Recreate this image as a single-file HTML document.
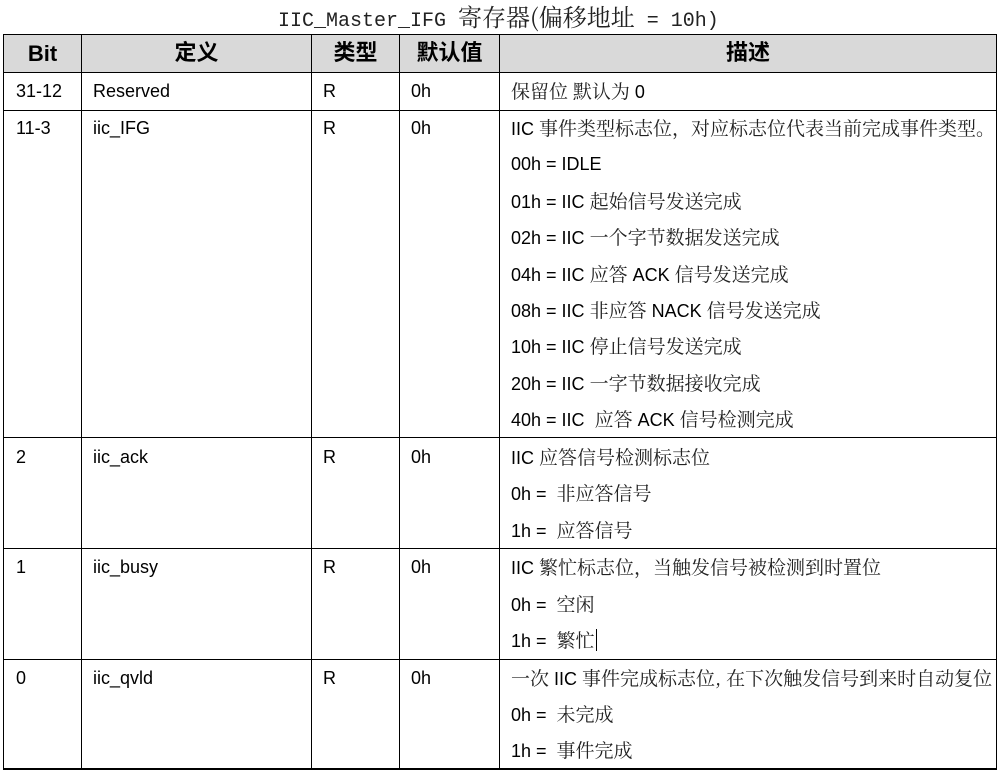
<!DOCTYPE html>
<html><head><meta charset="utf-8"><style>
body{margin:0;width:999px;height:772px;background:#fff;position:relative;overflow:hidden;font-family:"Liberation Sans","Noto Sans CJK SC",sans-serif;color:#000}
.h{position:absolute;background:#000;height:1px}
.v{position:absolute;background:#000;width:1px}
.t{position:absolute;font-size:18px;line-height:22px;white-space:nowrap}
.c{font-family:"Liberation Sans","Noto Serif CJK SC",serif}
.k{font-family:"Noto Serif CJK SC",serif;font-size:19px;color:#222}
.hd{position:absolute;font-size:22px;font-weight:bold;line-height:24px;text-align:center;font-family:"Liberation Sans","Noto Sans CJK SC",sans-serif}
.title{position:absolute;left:278px;top:4px;font-family:"Liberation Mono","Noto Serif CJK SC",monospace;font-size:20px;line-height:24px;color:#222;white-space:nowrap}
.title .k{font-size:24px;color:#222}
</style></head><body>
<div class="title">IIC_Master_IFG <span class="k">寄存器(偏移地址</span> = 10h)</div>
<div style="position:absolute;left:4px;top:35px;width:993px;height:37px;background:#d9d9d9"></div>
<div class="h" style="left:3px;top:34px;width:994px"></div>
<div class="h" style="left:3px;top:72px;width:994px"></div>
<div class="h" style="left:3px;top:110px;width:994px"></div>
<div class="h" style="left:3px;top:437px;width:994px"></div>
<div class="h" style="left:3px;top:548px;width:994px"></div>
<div class="h" style="left:3px;top:659px;width:994px"></div>
<div class="h" style="left:3px;top:768px;width:994px;height:2px"></div>
<div class="v" style="left:3px;top:34px;height:736px"></div>
<div class="v" style="left:81px;top:34px;height:736px"></div>
<div class="v" style="left:311px;top:34px;height:736px"></div>
<div class="v" style="left:399px;top:34px;height:736px"></div>
<div class="v" style="left:499px;top:34px;height:736px"></div>
<div class="v" style="left:996px;top:34px;height:736px"></div>
<div class="hd" style="left:4px;width:77px;top:42px">Bit</div>
<div class="hd" style="left:82px;width:229px;top:41px">定义</div>
<div class="hd" style="left:312px;width:87px;top:41px">类型</div>
<div class="hd" style="left:400px;width:99px;top:41px">默认值</div>
<div class="hd" style="left:500px;width:496px;top:41px">描述</div>

<div class="t" style="left:16px;top:80px">31-12</div>
<div class="t" style="left:93px;top:80px">Reserved</div>
<div class="t" style="left:323px;top:80px">R</div>
<div class="t" style="left:411px;top:80px">0h</div>
<div class="t c" style="left:511px;top:80px"><span class="k">保留位 默认为</span> 0</div>

<div class="t" style="left:16px;top:117px">11-3</div>
<div class="t" style="left:93px;top:117px">iic_IFG</div>
<div class="t" style="left:323px;top:117px">R</div>
<div class="t" style="left:411px;top:117px">0h</div>
<div class="t c" style="left:511px;top:117px">IIC <span class="k">事件类型标志位，对应标志位代表当前完成事件类型。</span></div>
<div class="t c" style="left:511px;top:153px">00h = IDLE</div>
<div class="t c" style="left:511px;top:190px">01h = IIC <span class="k">起始信号发送完成</span></div>
<div class="t c" style="left:511px;top:226px">02h = IIC <span class="k">一个字节数据发送完成</span></div>
<div class="t c" style="left:511px;top:263px">04h = IIC <span class="k">应答</span> ACK <span class="k">信号发送完成</span></div>
<div class="t c" style="left:511px;top:299px">08h = IIC <span class="k">非应答</span> NACK <span class="k">信号发送完成</span></div>
<div class="t c" style="left:511px;top:335px">10h = IIC <span class="k">停止信号发送完成</span></div>
<div class="t c" style="left:511px;top:372px">20h = IIC <span class="k">一字节数据接收完成</span></div>
<div class="t c" style="left:511px;top:408px">40h = IIC &nbsp;<span class="k">应答</span> ACK <span class="k">信号检测完成</span></div>

<div class="t" style="left:16px;top:446px">2</div>
<div class="t" style="left:93px;top:446px">iic_ack</div>
<div class="t" style="left:323px;top:446px">R</div>
<div class="t" style="left:411px;top:446px">0h</div>
<div class="t c" style="left:511px;top:446px">IIC <span class="k">应答信号检测标志位</span></div>
<div class="t c" style="left:511px;top:482px">0h = &nbsp;<span class="k">非应答信号</span></div>
<div class="t c" style="left:511px;top:519px">1h = &nbsp;<span class="k">应答信号</span></div>

<div class="t" style="left:16px;top:556px">1</div>
<div class="t" style="left:93px;top:556px">iic_busy</div>
<div class="t" style="left:323px;top:556px">R</div>
<div class="t" style="left:411px;top:556px">0h</div>
<div class="t c" style="left:511px;top:556px">IIC <span class="k">繁忙标志位，当触发信号被检测到时置位</span></div>
<div class="t c" style="left:511px;top:593px">0h = &nbsp;<span class="k">空闲</span></div>
<div class="t c" style="left:511px;top:629px">1h = &nbsp;<span class="k">繁忙</span></div>
<div class="v" style="left:596px;top:629px;height:22px"></div>

<div class="t" style="left:16px;top:667px">0</div>
<div class="t" style="left:93px;top:667px">iic_qvld</div>
<div class="t" style="left:323px;top:667px">R</div>
<div class="t" style="left:411px;top:667px">0h</div>
<div class="t c" style="left:511px;top:667px"><span class="k">一次</span> IIC <span class="k">事件完成标志位, 在下次触发信号到来时自动复位</span></div>
<div class="t c" style="left:511px;top:703px">0h = &nbsp;<span class="k">未完成</span></div>
<div class="t c" style="left:511px;top:739px">1h = &nbsp;<span class="k">事件完成</span></div>
</body></html>
